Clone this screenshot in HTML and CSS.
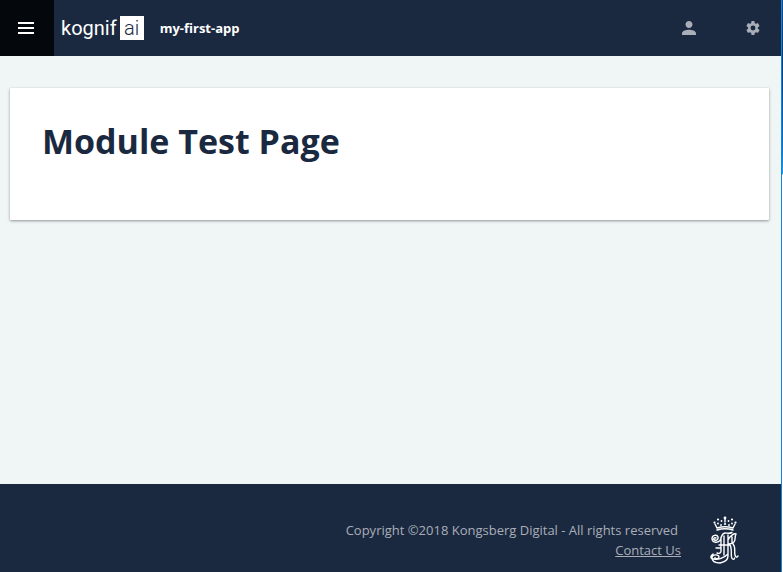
FILE: index.html
```html
<!DOCTYPE html>
<html lang="en">
<head>
<meta charset="utf-8">
<title>my-first-app</title>
<link rel="stylesheet" href="styles.css">
</head>
<body>
<div class="app">
  <header class="topbar">
    <button class="menu" type="button" aria-label="Menu">
      <svg width="16" height="12" viewBox="0 0 16 12" fill="#fff"><path d="M0 0h16v2H0zM0 5h16v2H0zM0 10h16v2H0z"/></svg>
    </button>
    <a class="logo" href="#"><span class="logo-name">kognif</span><span class="logo-box">ai</span></a>
    <span class="app-name">my-first-app</span>
    <nav class="actions">
      <button class="action" type="button" aria-label="User">
        <svg width="14" height="14" viewBox="4 4 16 16" fill="currentColor"><path d="M12 12c2.200 0 4-1.800 4-4s-1.800-4-4-4-4 1.800-4 4 1.800 4 4 4zm0 2c-3 0-8 1.300-8 4v2h16v-2c0-2.700-5-4-8-4z"/></svg>
      </button>
      <button class="action" type="button" aria-label="Settings">
        <svg width="14" height="14" viewBox="0 0 24 24" fill="currentColor"><path d="M20.400 13.200a9 9 0 0 0 0-2.400l2.500-2a.6.6 0 0 0 .15-.75l-2.400-4.100a.6.6 0 0 0-.73-.26l-2.950 1.200a8.700 8.700 0 0 0-2-1.170L14.500.6a.6.6 0 0 0-.6-.5h-4a.6.6 0 0 0-.6.5l-.44 3.120c-.72.300-1.400.7-2 1.170l-2.950-1.200a.6.6 0 0 0-.73.260L.9 8.050a.6.6 0 0 0 .15.75l2.500 2a9 9 0 0 0 0 2.400l-2.500 2a.6.6 0 0 0-.15.750l2.300 4.100c.150.260.460.360.730.260l2.950-1.200c.600.480 1.280.870 2 1.170l.440 3.120c.040.300.300.500.600.500h4c.300 0 .560-.200.600-.500l.440-3.120c.720-.300 1.400-.690 2-1.170l2.950 1.200c.270.100.580 0 .730-.260l2.400-4.100a.6.600 0 0 0-.150-.750zM12 16.200a4.200 4.200 0 1 1 0-8.400 4.200 4.200 0 0 1 0 8.400z"/></svg>
      </button>
    </nav>
  </header>
  <main class="content">
    <section class="card"><h1>Module Test Page</h1></section>
  </main>
  <footer class="footer">
    <div class="legal">
      <span class="copyright">Copyright ©2018 Kongsberg Digital - All rights reserved</span>
      <a href="#">Contact Us</a>
    </div>
    <svg class="crest" width="30" height="50" viewBox="0 -1 30 50" fill="none" stroke="#fff" stroke-width="1.400" stroke-linecap="round" stroke-linejoin="round">
      <path d="M7 14Q15 11.500 23 14M7 12Q15 9.500 23 12M7 12L5 8M23 12l2-4M15 3v3"/>
      <g fill="#fff" stroke="none"><circle cx="4.500" cy="6.500" r="1.100"/><circle cx="8" cy="3.500" r="1.100"/><circle cx="15" cy="2" r="1.400"/><circle cx="22" cy="3.500" r="1.100"/><circle cx="25.500" cy="6.500" r="1.100"/><circle cx="8" cy="7.500" r=".9"/><circle cx="11.500" cy="5" r=".9"/><circle cx="15" cy="8" r="1.100"/><circle cx="18.500" cy="5" r=".9"/><circle cx="22" cy="7.500" r=".9"/><circle cx="11" cy="9" r=".9"/><circle cx="19" cy="9" r=".9"/></g>
      <path d="M6 22c-2-1-3 1-1.500 2 2.500 1 4-1 3.500-3-1-3-6-2-6 1.500 0 4 5 5 8 2 2-3 1-7 5-7.500 2 0 4 1 7-.5M11 21v14c0 2-2 3-4 2M14 20v19M18 19v21c0 4-3 6-8 7-5 0-8-2-8-5 0-4 7-4 7-1 0 2-4 2.500-4 .5M9 29h11M6 32h5M18 24c2-4 6-7 8-6-1 2-1 3-1 5 0 4-3 5-7 5M22 21v6M20 29c2 3 1 9 1.500 12 .5 3 3 3 3 1M23 28c3 3 1 8 2 11 .5 2 2 3 3 1M3 38c-3 2-3 5 1 5 4 1 10-1 14-5"/>
    </svg>
  </footer>
</div>
<div class="window-edge"></div>
</body>
</html>
```
FILE: styles.css
```css
* { box-sizing: border-box; }
body {
  margin: 0;
  min-height: 100vh;
  display: flex;
  font-family: "Open Sans", sans-serif;
  font-size: 13px;
  line-height: 20px;
  background: #f0f5f5;
}
.app { flex: 1; display: flex; flex-direction: column; }
.window-edge {
  width: 2px;
  border-left: 1px solid #1683d8;
  background: linear-gradient(#08509c, #033c78 60px, #0878d0 150px, #18a0e8 174px, #fff 175px);
}
.topbar { display: flex; align-items: center; height: 56px; background: #1b2940; color: #fff; }
button { border: 0; padding: 0; background: none; display: flex; align-items: center; justify-content: center; }
.menu { width: 54px; height: 56px; background: #04070c; padding-right: 2px; }
.logo {
  display: flex;
  align-items: center;
  gap: 3px;
  margin-left: 7px;
  color: #fff;
  font-family: Roboto, sans-serif;
  font-size: 20px;
  line-height: 24px;
  text-decoration: none;
}
.logo-box { width: 24px; height: 24px; background: #fff; color: #1b2940; text-align: center; font-weight: 300; }
.app-name { margin-left: 16px; font-weight: 700; }
.actions { display: flex; gap: 8px; margin-left: auto; }
.action { width: 56px; height: 56px; color: #a9aeb8; }
.content { flex: 1; padding: 32px 12px 32px 10px; }
.card {
  min-height: 132px;
  padding: 32px;
  background: #fff;
  border-radius: 1px;
  box-shadow: 0 1px 3px rgba(0, 0, 0, .4);
}
h1 { margin: 0; font-size: 34px; line-height: 42px; font-weight: 700; color: #1b2940; }
.footer {
  display: flex;
  justify-content: flex-end;
  align-items: center;
  gap: 29px;
  min-height: 88px;
  padding: 24px 41px 0 16px;
  background: #1b2940;
  color: #a9aeb8;
}
.legal { display: flex; flex-direction: column; align-items: flex-end; }
.copyright { padding-right: 3px; }
.legal a { color: inherit; }
```
